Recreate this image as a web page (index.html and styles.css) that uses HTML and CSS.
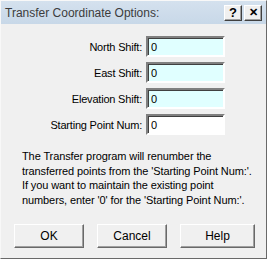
FILE: index.html
```html
<!DOCTYPE html>
<html lang="en">
<head>
  <meta charset="UTF-8" />
  <title>Transfer Coordinate Options</title>
  <link rel="stylesheet" href="styles.css">
</head>
<body>

  <div class="window">
    <!-- Title bar -->
    <div class="titlebar">
      <span class="title">Transfer Coordinate Options:</span>
      <div class="title-buttons">
        <button class="tbtn">?</button>
        <button class="tbtn close">&#x2715;</button>
      </div>
    </div>

    <div class="content">
      <div class="fields">
        <div class="row">
          <label for="north">North Shift:</label>
          <input id="north" class="shift" type="text" value="0" />
        </div>
        <div class="row">
          <label for="east">East Shift:</label>
          <input id="east" class="shift" type="text" value="0" />
        </div>
        <div class="row">
          <label for="elev">Elevation Shift:</label>
          <input id="elev" class="shift" type="text" value="0" />
        </div>
        <div class="row">
          <label for="start">Starting Point Num:</label>
          <input id="start" type="text" value="0" />
        </div>
      </div>

      <p class="note">The Transfer program will renumber the transferred points from the 'Starting Point Num:'. If you want to maintain the existing point numbers, enter '0' for the 'Starting Point Num:'.</p>

      <div class="actions">
        <button class="btn">OK</button>
        <button class="btn">Cancel</button>
        <button class="btn">Help</button>
      </div>
    </div>
  </div>

</body>
</html>
```

FILE: styles.css
```css
* {
  box-sizing: border-box;
}

html, body {
  margin: 0;
  padding: 0;
  background: #f0f0f0;
}

.window {
  width: 267px;
  height: 259px;
  background: #f0f0f0;
  border: 1px solid;
  border-color: #f8f8f8 #696969 #696969 #f8f8f8;
  font-family: 'Liberation Sans', Arial, sans-serif;
  font-size: 11px;
  color: #000;
  display: flex;
  flex-direction: column;
}

.titlebar {
  height: 23px;
  background: linear-gradient(to bottom, #d4e1ee, #c8d8e8);
  display: flex;
  align-items: center;
  justify-content: space-between;
  padding: 0 4px 0 4px;
}

.title {
  font-size: 12px;
  color: #3c3c3c;
}

.title-buttons {
  display: flex;
  gap: 2px;
}

.tbtn {
  width: 18px;
  height: 16px;
  padding: 0;
  background: #f0f0f0;
  border: 1px solid;
  border-color: #fff #404040 #404040 #fff;
  box-shadow: inset -1px -1px 0 #a0a0a0;
  font-family: 'Liberation Sans', Arial, sans-serif;
  font-size: 13px;
  font-weight: bold;
  line-height: 13px;
  color: #000;
}

.close {
  font-size: 11px;
}

.content {
  flex: 1;
  padding: 12px 0 0 0;
  display: flex;
  flex-direction: column;
}

.fields {
  display: flex;
  flex-direction: column;
  gap: 5px;
}

.row {
  display: flex;
  align-items: center;
  height: 21px;
}

.row label {
  width: 145px;
  text-align: right;
  padding-right: 4px;
  letter-spacing: -0.2px;
}

.row input {
  width: 79px;
  height: 21px;
  padding: 0 3px;
  border: 2px solid;
  border-color: #808080 #fff #fff #808080;
  box-shadow: inset 1px 1px 0 #404040;
  background: #fff;
  font-family: 'Liberation Sans', Arial, sans-serif;
  font-size: 11px;
  outline: none;
}

.row input.shift {
  background: #e0ffff;
}

.note {
  margin: 14px 0 0 21px;
  width: 235px;
  line-height: 14.5px;
  letter-spacing: -0.1px;
}

.actions {
  display: flex;
  gap: 13px;
  margin: 17px 0 0 13px;
}

.btn {
  width: 70px;
  height: 24px;
  padding: 0;
  background: #f0f0f0;
  border: 1px solid;
  border-color: #fff #696969 #696969 #fff;
  box-shadow: inset -1px -1px 0 #a0a0a0;
  font-family: 'Liberation Sans', Arial, sans-serif;
  font-size: 12px;
  color: #000;
}

.btn:last-child {
  width: 75px;
}
```
